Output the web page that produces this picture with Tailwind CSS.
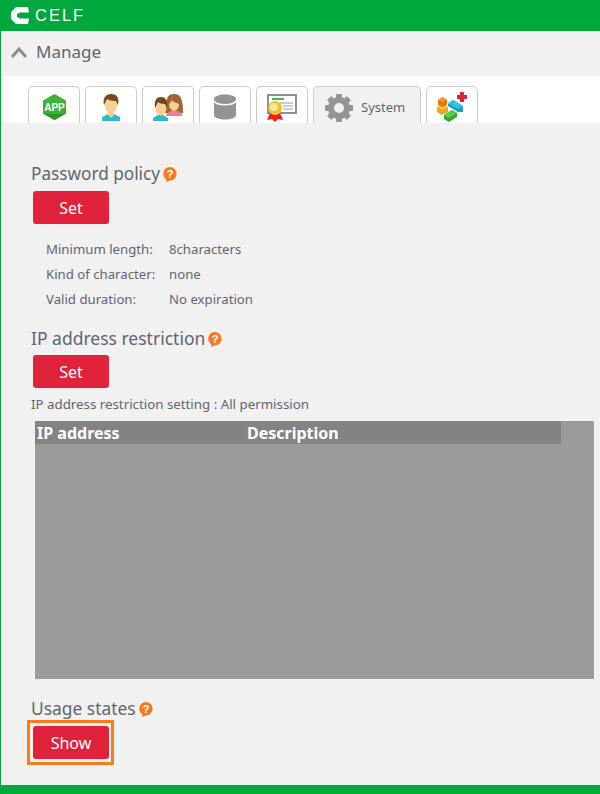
<!DOCTYPE html>
<html lang="en">

<head>
    <meta charset="UTF-8" />
    <meta name="viewport" content="width=device-width, initial-scale=1.0" />
    <title>CELF Manage</title>
    <script src="https://cdn.jsdelivr.net/npm/@tailwindcss/browser@4"></script>
</head>

<body class="bg-[#f1f1f1] font-['Noto_Sans',sans-serif] text-[#5f6470]">
    <div class="h-[794px] w-[600px] overflow-hidden flex flex-col border-l border-[#00a73c] relative">
        <!-- header -->
        <div class="h-[31px] -ml-px bg-[#00a73c] flex items-center pl-[11px] shrink-0">
            <svg width="18" height="17" viewBox="0 0 18 17" fill="#fff">
                <path d="M5 0H17L18 5.500H9L6 7V10L9 11.500H18L17 17H5L0 12V5Z" />
            </svg>
            <span class="ml-[6px] text-[16.500px] leading-none tracking-[2px] text-white font-['Liberation_Sans',sans-serif]">CELF</span>
        </div>

        <!-- manage bar -->
        <div class="h-[45px] flex items-center pl-[9px] pb-[3px] shrink-0">
            <svg width="18" height="14" viewBox="0 0 18 14" fill="none" stroke="#8b8b8b" stroke-width="3">
                <path d="M2 12L9 4L16 12" />
            </svg>
            <span class="ml-[8px] text-[17px]">Manage</span>
        </div>

        <!-- tabs -->
        <div class="h-[47px] bg-white flex items-end gap-[5px] pl-[27px] shrink-0">
            <div class="w-[52px] h-[37px] border border-b-0 border-[#cccccc] rounded-t-[5px] flex justify-center pt-[7px]">
                <svg width="23" height="26" viewBox="0 0 23 26">
                    <path d="M11.500 0L23 6.500V19.500L11.500 26L0 19.500V6.500Z" fill="#3db135" />
                    <path d="M11.500 20L23 19.500L11.500 26L0 19.500Z" fill="#2e9429" />
                    <text x="11.500" y="17" text-anchor="middle" font-size="10" font-weight="700" fill="#fff" font-family="Liberation Sans">APP</text>
                </svg>
            </div>
            <div class="w-[52px] h-[37px] border border-b-0 border-[#cccccc] rounded-t-[5px] flex justify-center pt-[7px]">
                <svg width="18" height="27" viewBox="0 0 18 27">
                    <path d="M0 27V23L6 20H12L18 23V27Z" fill="#2fb6d2" />
                    <path d="M6 17H12V21L9 24L6 21Z" fill="#f7cd8f" />
                    <ellipse cx="9" cy="10" rx="6.500" ry="9" fill="#f9cf90" />
                    <path d="M2 11C0 3 5 0 9 0C14 0 18 3 16 11L14 7C10 7 6 6 5 5C4 7 3 9 2 11Z" fill="#7a4a1e" />
                </svg>
            </div>
            <div class="w-[52px] h-[37px] border border-b-0 border-[#cccccc] rounded-t-[5px] flex justify-center pt-[7px]">
                <svg width="30" height="27" viewBox="0 0 30 27">
                    <path d="M12 19C12 4 15 0 21 0C27 0 30 4 30 19Z" fill="#a0622f" />
                    <path d="M13 22V20L18 17H25L29 20V22Z" fill="#f07aa6" />
                    <ellipse cx="21" cy="10" rx="5" ry="7" fill="#f9cf90" />
                    <path d="M16 10C16 5 19 3 22 3C24 3 26 6 26 10C23 9 19 7 19 6C18 8 17 9 16 10Z" fill="#a0622f" />
                    <path d="M0 27V24L5 21H10L15 24V27Z" fill="#2fb6d2" />
                    <ellipse cx="8" cy="14" rx="5.500" ry="7.500" fill="#f9cf90" />
                    <path d="M2 14C1 6 4 3 8 3C12 3 15 6 14 14L12 10C9 10 6 9 5 8C4 10 3 12 2 14Z" fill="#6f4519" />
                </svg>
            </div>
            <div class="w-[52px] h-[37px] border border-b-0 border-[#cccccc] rounded-t-[5px] flex justify-center pt-[7px]">
                <svg width="22" height="26" viewBox="0 0 22 26">
                    <path d="M0 5C0 -1 22 -1 22 5V21C22 27 0 27 0 21Z" fill="#949494" />
                    <path d="M0 7C3 12 19 12 22 7" fill="none" stroke="#fff" stroke-width="1.500" />
                </svg>
            </div>
            <div class="w-[52px] h-[37px] border border-b-0 border-[#cccccc] rounded-t-[5px] flex justify-center pt-[7px]">
                <svg width="30" height="28" viewBox="0 0 30 28">
                    <rect x="1" y="1" width="28" height="18" fill="#fff" stroke="#8f8f8f" stroke-width="2" />
                    <rect x="5" y="4" width="12" height="2" fill="#3fc03a" />
                    <path d="M13 9H26M16 12H26M16 15H26" stroke="#9a9a9a" stroke-width="1" />
                    <path d="M0 26L3 19H13L16 26L11 25L8 28L5 25Z" fill="#ee1c25" />
                    <circle cx="8" cy="14" r="7" fill="#eec22a" />
                    <circle cx="7" cy="13" r="4" fill="#f9e79a" />
                </svg>
            </div>
            <div class="w-[108px] h-[37px] border border-b-0 border-[#cccccc] rounded-t-[5px] bg-[#f1f1f1] flex items-center pl-[11px] pt-[5px]">
                <svg width="28" height="28" viewBox="-14 -14 28 28" fill="#949494">
                    <circle r="8" fill="none" stroke="#949494" stroke-width="6" />
                    <rect x="-3" y="-14" width="6" height="6" rx="1" />
                    <rect x="-3" y="-14" width="6" height="6" rx="1" transform="rotate(45)" />
                    <rect x="-3" y="-14" width="6" height="6" rx="1" transform="rotate(90)" />
                    <rect x="-3" y="-14" width="6" height="6" rx="1" transform="rotate(135)" />
                    <rect x="-3" y="-14" width="6" height="6" rx="1" transform="rotate(180)" />
                    <rect x="-3" y="-14" width="6" height="6" rx="1" transform="rotate(225)" />
                    <rect x="-3" y="-14" width="6" height="6" rx="1" transform="rotate(270)" />
                    <rect x="-3" y="-14" width="6" height="6" rx="1" transform="rotate(315)" />
                </svg>
                <span class="ml-[8px] text-[13px]">System</span>
            </div>
            <div class="w-[52px] h-[37px] border border-b-0 border-[#cccccc] rounded-t-[5px] pt-[5px] pl-[9px]">
                <svg width="32" height="31" viewBox="0 0 32 31">
                    <path d="M24 0H28V3H31V7H28V10H24V7H21V3H24Z" fill="#e0223a" />
                    <path d="M12 12L17 8L27 14V20L22 20L12 14Z" fill="#1c9fbb" />
                    <path d="M12 11L17 8L27 14L22 17Z" fill="#2fc4e0" />
                    <path d="M1 15L6 12L12 15V20L6 23L1 20Z" fill="#e8a61e" />
                    <path d="M1 15L6 12L12 15L6 18Z" fill="#f7c538" />
                    <path d="M8 23L16 18L21 21V25L13 30L8 27Z" fill="#36a82b" />
                    <path d="M8 23L16 18L21 21L13 26Z" fill="#56d040" />
                    <path d="M2 8L6.500 5L11 8V13L6.500 15L2 13Z" fill="#e6740f" />
                    <path d="M2 8L6.500 5L11 8L6.500 10Z" fill="#f79533" />
                </svg>
            </div>
        </div>

        <!-- content -->
        <div class="pl-[30px] pr-[5px]">
            <div class="mt-[38px] h-[24px] pt-px flex items-center text-[17.200px]">
                Password policy
                <svg class="ml-[3px] mt-px" width="14" height="15" viewBox="0 0 14 15"><path d="M7 0A6.700 6.700 0 0 1 7 13.400L3 15L3.500 12.400A6.700 6.700 0 0 1 7 0Z" fill="#f47b20" /><text x="7" y="11" text-anchor="middle" font-size="11" font-weight="700" fill="#fff" font-family="Liberation Sans">?</text></svg>
            </div>
            <button class="block mt-[6px] ml-[2px] w-[76px] h-[33px] pt-px rounded-[3px] bg-[#e0223a] text-white text-[16px]">Set</button>
            <div class="mt-[13px] ml-[15px] text-[13.200px] grid grid-cols-[123px_1fr] auto-rows-[25px] items-center">
                <div>Minimum length:</div><div>8characters</div>
                <div>Kind of character:</div><div>none</div>
                <div>Valid duration:</div><div>No expiration</div>
            </div>

            <div class="mt-[14px] h-[24px] pt-px flex items-center text-[17.500px]">
                IP address restriction
                <svg class="ml-[3px] mt-px" width="14" height="15" viewBox="0 0 14 15"><path d="M7 0A6.700 6.700 0 0 1 7 13.400L3 15L3.500 12.400A6.700 6.700 0 0 1 7 0Z" fill="#f47b20" /><text x="7" y="11" text-anchor="middle" font-size="11" font-weight="700" fill="#fff" font-family="Liberation Sans">?</text></svg>
            </div>
            <button class="block mt-[5px] ml-[2px] w-[76px] h-[33px] pt-px rounded-[3px] bg-[#e0223a] text-white text-[16px]">Set</button>
            <div class="mt-[6px] h-[22px] flex items-center text-[13.300px]">IP address restriction setting : All permission</div>

            <div class="mt-[5px] ml-[4px] w-[559px] h-[258px] bg-[#9b9b9b]">
                <div class="w-[526px] h-[23px] bg-[#838383] flex items-center text-white font-bold text-[16px]">
                    <div class="w-[212px] pl-[2px]">IP address</div>
                    <div>Description</div>
                </div>
            </div>

            <div class="mt-[17px] h-[24px] pt-px flex items-center text-[17.400px]">
                Usage states
                <svg class="ml-[3px] mt-px" width="14" height="15" viewBox="0 0 14 15"><path d="M7 0A6.700 6.700 0 0 1 7 13.400L3 15L3.500 12.400A6.700 6.700 0 0 1 7 0Z" fill="#f47b20" /><text x="7" y="11" text-anchor="middle" font-size="11" font-weight="700" fill="#fff" font-family="Liberation Sans">?</text></svg>
            </div>
            <div class="-ml-[4px] w-[87px] h-[45px] border-[3px] border-[#f97c1c] flex items-center pl-[3px]">
                <button class="w-[76px] h-[33px] rounded-[3px] bg-[#e0223a] text-white text-[16px]">Show</button>
            </div>
        </div>

        <!-- footer -->
        <div class="absolute bottom-0 -left-px w-[600px] h-[9px] bg-[#00a73c]"></div>
    </div>
</body>

</html>
